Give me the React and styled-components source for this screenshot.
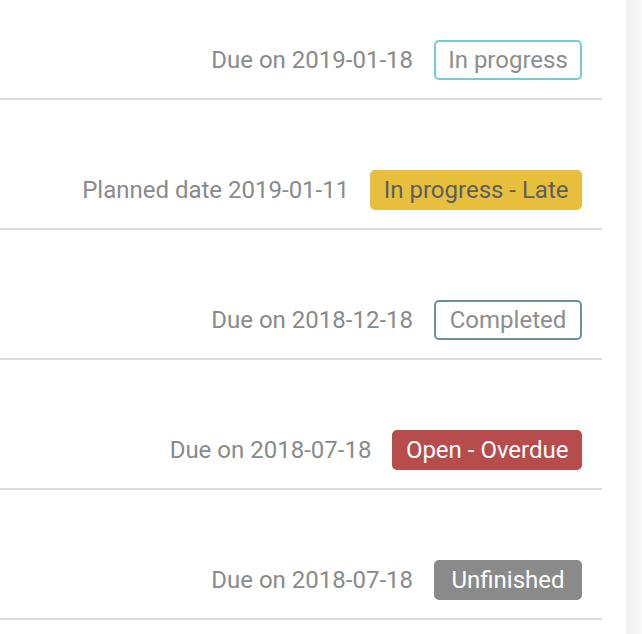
import React from "react";
import styled, { createGlobalStyle, css } from "styled-components";

const GlobalStyle = createGlobalStyle`
  html, body {
    margin: 0;
    padding: 0;
    background: #ffffff;
    font-family: Roboto, "Liberation Sans", Arial, sans-serif;
  }
`;

const Page = styled.div`
  display: flex;
  height: 634px;
  overflow: hidden;
`;

const List = styled.div`
  width: 602px;
  display: flex;
  flex-direction: column;
`;

const Gutter = styled.div`
  width: 24px;
`;

const Track = styled.div`
  width: 16px;
  background: linear-gradient(to right, #f1f1f1, #f8f8f8);
`;

const Row = styled.div`
  height: 110px;
  flex-shrink: 0;
  display: flex;
  justify-content: flex-end;
  align-items: flex-end;
  gap: 21px;
  padding: 0 20px 18px 0;
  border-bottom: 2px solid #dcdcdc;

  &:first-child {
    height: 80px;
  }
`;

const DateText = styled.span`
  font-size: 24px;
  line-height: 40px;
  color: #8a8a8a;
`;

const variants = {
  progress: css`
    border-color: #72cdd3;
    background: #fff;
    color: #8d8d8d;
  `,
  late: css`
    border-color: #e8bf3d;
    background: #e8bf3d;
    color: #5e5e5e;
  `,
  done: css`
    border-color: #6a90a6;
    background: #fff;
    color: #8d8d8d;
  `,
  overdue: css`
    border-color: #b74c4c;
    background: #b74c4c;
    color: #ffffff;
  `,
  unfinished: css`
    border-color: #8a8a8a;
    background: #8a8a8a;
    color: #ffffff;
  `,
};

const Badge = styled.span`
  display: inline-flex;
  align-items: center;
  justify-content: center;
  min-width: 148px;
  height: 40px;
  box-sizing: border-box;
  padding: 0 11.5px;
  border: 2px solid;
  border-radius: 5px;
  font-size: 24px;
  white-space: nowrap;
  ${(p) => variants[p.$kind]}
`;

const items = [
  { date: "Due on 2019-01-18", label: "In progress", kind: "progress" },
  { date: "Planned date 2019-01-11", label: "In progress - Late", kind: "late" },
  { date: "Due on 2018-12-18", label: "Completed", kind: "done" },
  { date: "Due on 2018-07-18", label: "Open - Overdue", kind: "overdue" },
  { date: "Due on 2018-07-18", label: "Unfinished", kind: "unfinished" },
];

export default function App() {
  return (
    <>
      <GlobalStyle />
      <Page>
        <List>
          {items.map((it, i) => (
            <Row key={i}>
              <DateText>{it.date}</DateText>
              <Badge $kind={it.kind}>{it.label}</Badge>
            </Row>
          ))}
        </List>
        <Gutter />
        <Track />
      </Page>
    </>
  );
}
